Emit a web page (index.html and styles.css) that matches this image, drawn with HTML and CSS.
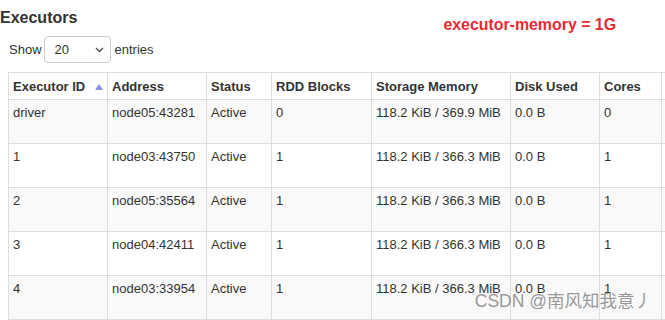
FILE: index.html
```html
<!DOCTYPE html>
<html>
    <head>
        <meta charset="UTF-8">
        <title>Executors</title>
        <link rel="stylesheet" href="styles.css">
    </head>
    <body>
        <div class="page">
            <div class="topdiv">
                <h4>Executors</h4>
                <span class="note">executor-memory = 1G</span>
            </div>

            <div class="lengthdiv">
                <span>Show</span>
                <div class="selectbox">
                    <span>20</span>
                    <svg width="9" height="6" viewBox="0 0 9 6"><path d="M1 1 L4.5 4.5 L8 1" fill="none" stroke="#555" stroke-width="1.4"/></svg>
                </div>
                <span>entries</span>
            </div>

            <table class="extable">
                <colgroup>
                    <col style="width:99px">
                    <col style="width:99px">
                    <col style="width:65px">
                    <col style="width:100px">
                    <col style="width:139px">
                    <col style="width:89px">
                    <col style="width:62px">
                    <col style="width:60px">
                </colgroup>
                <thead>
                    <tr>
                        <th>Executor ID <svg class="sorticon" width="8" height="6" viewBox="0 0 8 6"><path d="M0 6 L4 0 L8 6 Z" fill="#8b8fe3"/></svg></th>
                        <th>Address</th>
                        <th>Status</th>
                        <th>RDD Blocks</th>
                        <th>Storage Memory</th>
                        <th>Disk Used</th>
                        <th>Cores</th>
                        <th></th>
                    </tr>
                </thead>
                <tbody>
                    <tr>
                        <td>driver</td><td>node05:43281</td><td>Active</td><td>0</td><td>118.2 KiB / 369.9 MiB</td><td>0.0 B</td><td>0</td><td></td>
                    </tr>
                    <tr>
                        <td>1</td><td>node03:43750</td><td>Active</td><td>1</td><td>118.2 KiB / 366.3 MiB</td><td>0.0 B</td><td>1</td><td></td>
                    </tr>
                    <tr>
                        <td>2</td><td>node05:35564</td><td>Active</td><td>1</td><td>118.2 KiB / 366.3 MiB</td><td>0.0 B</td><td>1</td><td></td>
                    </tr>
                    <tr>
                        <td>3</td><td>node04:42411</td><td>Active</td><td>1</td><td>118.2 KiB / 366.3 MiB</td><td>0.0 B</td><td>1</td><td></td>
                    </tr>
                    <tr>
                        <td>4</td><td>node03:33954</td><td>Active</td><td>1</td><td>118.2 KiB / 366.3 MiB</td><td>0.0 B</td><td>1</td><td></td>
                    </tr>
                </tbody>
            </table>

            <div class="watermark">CSDN @南风知我意丿</div>
        </div>
    </body>
</html>
```

FILE: styles.css
```css
*{
    font-family: "Liberation Sans", Arial, sans-serif;
    box-sizing: border-box;
}
body{
    margin: 0;
    background-color: white;
}
.page{
    position: relative;
    width: 665px;
    height: 320px;
    overflow: hidden;
    color: #333;
    font-size: 13px;
}
.topdiv{
    display: flex;
    align-items: flex-start;
    height: 30px;
}
h4{
    margin: 8px 0 0 0;
    font-size: 16px;
    line-height: 20px;
    font-weight: bold;
    color: #333;
}
.note{
    margin-left: 366px;
    margin-top: 15px;
    font-size: 15.9px;
    line-height: 20px;
    font-weight: bold;
    color: #ea2a32;
}
.lengthdiv{
    display: flex;
    align-items: center;
    gap: 2px;
    margin-left: 9px;
    margin-top: 6px;
    height: 27px;
}
.lengthdiv .selectbox{
    margin-right: 2px;
}
.selectbox{
    display: flex;
    align-items: center;
    justify-content: space-between;
    width: 67px;
    height: 27px;
    padding: 0 6px 0 10px;
    border: solid 1px #ccc;
    border-radius: 4px;
    background-color: white;
}
.extable{
    margin-top: 9px;
    margin-left: 8px;
    width: 713px;
    table-layout: fixed;
    border-collapse: collapse;
}
.extable th, .extable td{
    border: solid 1px #ddd;
    text-align: left;
    vertical-align: top;
    padding: 3px 4px;
    line-height: 20px;
    white-space: nowrap;
    overflow: hidden;
}
.extable th{
    height: 26px;
    padding-top: 4px;
    padding-bottom: 2px;
    font-weight: bold;
    background-color: white;
}
.extable td{
    height: 44px;
}
.extable tbody tr:nth-child(odd){
    background-color: #f9f9f9;
}
.sorticon{
    margin-left: 6px;
    vertical-align: 1px;
}
.watermark{
    position: absolute;
    right: 13px;
    bottom: 8px;
    font-family: "Liberation Sans", "Noto Sans CJK SC", sans-serif;
    font-size: 17.5px;
    color: rgba(120, 120, 120, 0.75);
}
```
